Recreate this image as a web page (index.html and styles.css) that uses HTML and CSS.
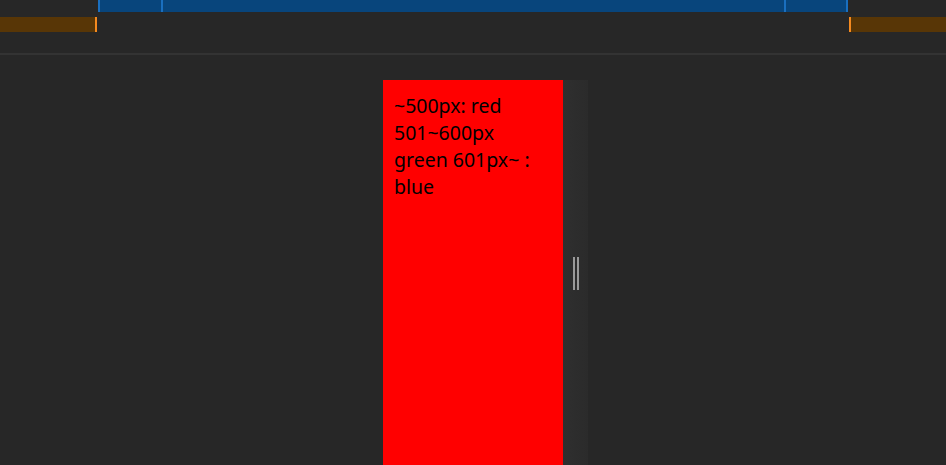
FILE: index.html
```html
<!DOCTYPE html>
<html>
<head>
<meta charset="utf-8">
<link rel="stylesheet" href="styles.css">
</head>
<body>
<div class="toolbar">
  <div class="mq-row mq-max">
    <div class="mq-blue">
      <div class="seg seg-a"></div>
      <div class="seg seg-b"></div>
      <div class="seg seg-c"></div>
    </div>
  </div>
  <div class="mq-row mq-min">
    <div class="mq-left"></div>
    <div class="mq-right"></div>
  </div>
</div>
<div class="stage">
  <div class="device">
    <div class="viewport">
      <p class="content">~500px: red 501~600px green 601px~ : blue</p>
    </div>
    <div class="resizer">
      <div class="handle"></div>
    </div>
  </div>
</div>
</body>
</html>
```
FILE: styles.css
```css
html, body {
  margin: 0;
  padding: 0;
  background: #272727;
  width: 946px;
  height: 465px;
  overflow: hidden;
}
.toolbar {
  height: 53px;
  display: flex;
  flex-direction: column;
  gap: 5px;
  border-bottom: 2px solid #333333;
}
.mq-row {
  display: flex;
}
.mq-max {
  height: 12px;
}
.mq-blue {
  margin-left: 98px;
  width: 750px;
  display: flex;
  background: #08457c;
}
.seg {
  height: 12px;
  border-left: 2px solid #1a6fbf;
  box-sizing: border-box;
}
.seg-a { width: 63px; }
.seg-b { width: 623px; }
.seg-c { width: 64px; border-right: 2px solid #1a6fbf; }
.mq-min {
  height: 15px;
  justify-content: space-between;
}
.mq-left {
  width: 95px;
  background: #583606;
  border-right: 2px solid #f58a1f;
}
.mq-right {
  width: 95px;
  background: #583606;
  border-left: 2px solid #f58a1f;
}
.stage {
  display: flex;
  padding-top: 25px;
  padding-left: 383px;
}
.device {
  display: flex;
  height: 400px;
}
.viewport {
  width: 180px;
  background: #ff0000;
  box-sizing: border-box;
  padding: 12px 14px 0 11px;
}
.content {
  margin: 0;
  font-family: "Noto Sans", sans-serif;
  font-size: 19.5px;
  line-height: 27px;
  color: #000;
}
.resizer {
  width: 25px;
  background: linear-gradient(to right, #2f2f2f, #2b2b2b);
  display: flex;
  justify-content: center;
  padding-top: 177px;
}
.handle {
  width: 6px;
  height: 33px;
  box-sizing: border-box;
  border-left: 2px solid #9a9a9a;
  border-right: 2px solid #9a9a9a;
}
```
